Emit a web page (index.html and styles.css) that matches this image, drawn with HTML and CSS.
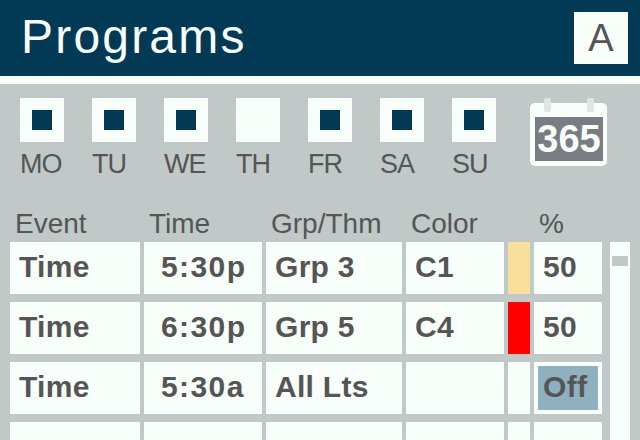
FILE: index.html
```html
<!DOCTYPE html>
<html lang="en">
<head>
<meta charset="UTF-8">
<title>Programs</title>
<link rel="stylesheet" href="styles.css">
</head>
<body>
<div class="header">
  <div class="title">Programs</div>
  <div class="mode">A</div>
</div>

<div class="days-row">
  <div class="days">
    <div class="day"><div class="check on"></div><span>MO</span></div>
    <div class="day"><div class="check on"></div><span>TU</span></div>
    <div class="day"><div class="check on"></div><span>WE</span></div>
    <div class="day"><div class="check"></div><span>TH</span></div>
    <div class="day"><div class="check on"></div><span>FR</span></div>
    <div class="day"><div class="check on"></div><span>SA</span></div>
    <div class="day"><div class="check on"></div><span>SU</span></div>
  </div>
  <svg class="cal" width="78" height="69" viewBox="0 0 78 69">
    <rect x="0" y="5" width="77" height="63" rx="5" fill="#f8fefa"/>
    <rect x="14" y="0" width="7" height="14" rx="2" fill="#dfe5e4"/>
    <rect x="57" y="0" width="7" height="14" rx="2" fill="#dfe5e4"/>
    <rect x="5" y="19" width="68" height="44" fill="#797d83"/>
    <text x="39" y="54" text-anchor="middle" class="cal-text">365</text>
  </svg>
</div>

<div class="table-wrap">
  <div class="table">
    <div class="th">Event</div>
    <div class="th">Time</div>
    <div class="th">Grp/Thm</div>
    <div class="th">Color</div>
    <div class="th"></div>
    <div class="th">%</div>

    <div class="td">Time</div>
    <div class="td time">5:30p</div>
    <div class="td">Grp 3</div>
    <div class="td">C1</div>
    <div class="td swatch-cream"></div>
    <div class="td">50</div>

    <div class="td">Time</div>
    <div class="td time">6:30p</div>
    <div class="td">Grp 5</div>
    <div class="td">C4</div>
    <div class="td swatch-red"></div>
    <div class="td">50</div>

    <div class="td">Time</div>
    <div class="td time">5:30a</div>
    <div class="td">All Lts</div>
    <div class="td"></div>
    <div class="td"></div>
    <div class="td off-cell"><div class="off">Off</div></div>

    <div class="td"></div>
    <div class="td"></div>
    <div class="td"></div>
    <div class="td"></div>
    <div class="td"></div>
    <div class="td"></div>
  </div>
  <div class="scrollbar"><div class="thumb"></div></div>
</div>
</body>
</html>
```

FILE: styles.css
```css
html, body{
  padding:0;
  margin:0;
  height:440px;
  overflow:hidden;
  background:#c0c8c8;
  color:#555;
  font-family:"Liberation Sans", Arial, sans-serif;
}

.header{
  display:flex;
  justify-content:space-between;
  align-items:center;
  box-sizing:border-box;
  height:84px;
  padding:0 12px 0 21px;
  background:#023a56;
  border-bottom:8px solid #f8fefa;
}

.title{
  color:#f8fefa;
  font-size:48px;
  letter-spacing:2.2px;
  line-height:68px;
  padding-bottom:3px;
}

.mode{
  width:54px;
  height:52px;
  line-height:52px;
  text-align:center;
  background:#f8fefa;
  font-size:38px;
}

.days-row{
  display:flex;
  align-items:flex-start;
  padding:14px 0 0 20px;
  height:114px;
  box-sizing:border-box;
}

.days{
  display:flex;
  width:510px;
}

.day{
  width:72px;
  font-size:27px;
  line-height:30px;
  letter-spacing:-1px;
}

.day span{
  display:block;
  margin-top:7px;
}

.check{
  display:flex;
  align-items:center;
  justify-content:center;
  width:44px;
  height:44px;
  background:#f8fefa;
}

.check.on::after{
  content:"";
  width:20px;
  height:20px;
  background:#023a56;
}

.cal-text{
  font-family:"Liberation Sans", Arial, sans-serif;
  font-weight:bold;
  font-size:38px;
  fill:#f8fefa;
}

.table-wrap{
  display:flex;
  align-items:flex-start;
  height:242px;
  overflow:hidden;
  padding-left:10px;
}

.table{
  display:grid;
  grid-template-columns:130px 118px 136px 98px 22px 68px;
  grid-template-rows:36px 52px 52px 52px 52px;
  column-gap:4px;
  row-gap:8px;
  margin-right:8px;
}

.th{
  padding:11px 0 0 5px;
  font-size:28px;
  line-height:30px;
}

.td{
  background:#f8fefa;
  padding-left:9px;
  font-size:30px;
  font-weight:bold;
  line-height:50px;
  letter-spacing:.3px;
}

.td.time{
  padding-left:17px;
  letter-spacing:1.4px;
}

.swatch-cream{
  background:#f8e09a;
}

.swatch-red{
  background:#ff0000;
}

.off-cell{
  padding:4px;
}

.off{
  height:44px;
  line-height:42px;
  padding-left:5px;
  background:#8fb0bf;
}

.scrollbar{
  box-sizing:border-box;
  width:20px;
  height:198px;
  margin-top:44px;
  padding:14px 2px 0;
  background:#f8fefa;
}

.thumb{
  height:10px;
  background:#c0c8c8;
}
```
